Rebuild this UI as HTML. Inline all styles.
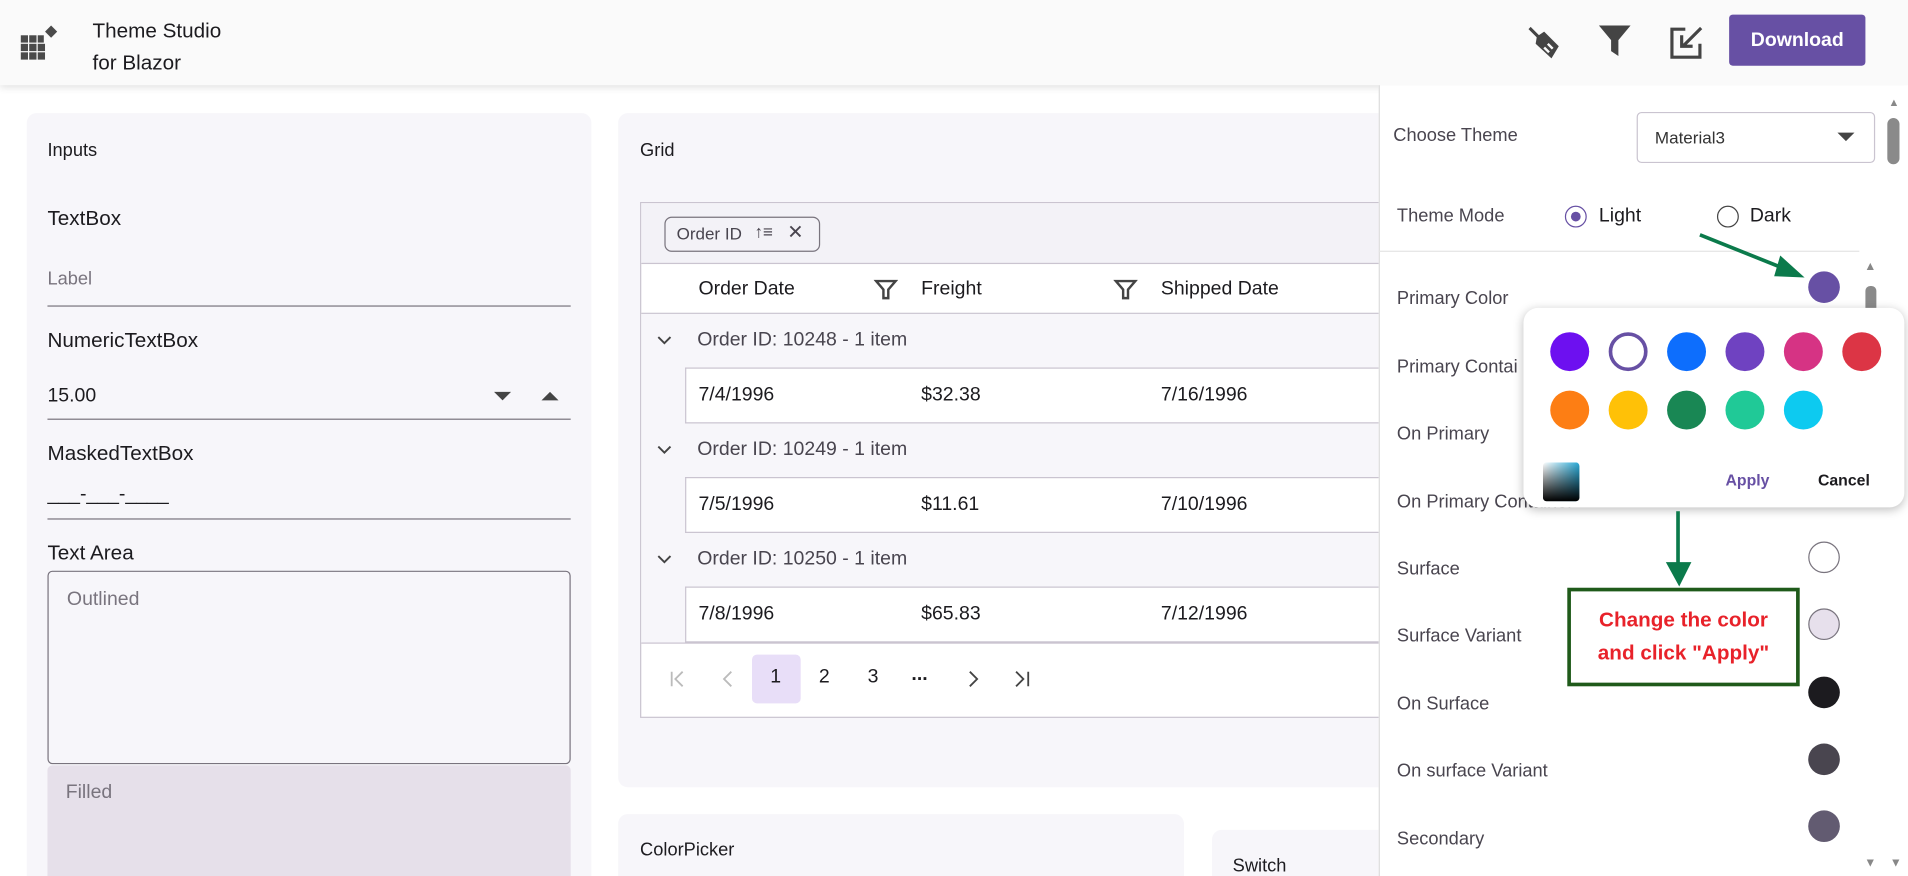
<!DOCTYPE html>
<html><head><meta charset="utf-8"><style>
*{margin:0;padding:0;box-sizing:border-box}
html,body{width:1908px;height:876px;overflow:hidden;background:#fff}
#w{position:absolute;left:0;top:0;width:1568px;height:720px;transform:scale(1.21684);transform-origin:0 0;font-family:"Liberation Sans",sans-serif;color:#1c1b1f;overflow:hidden}
.a{position:absolute;white-space:nowrap}
.card{position:absolute;background:#f7f6fa;border-radius:8px}
.t15{font-size:15px}.t17{font-size:17px}
.line{position:absolute;height:1px;background:#79747e}
.g{color:#49454f}
.cir{position:absolute;width:26px;height:26px;border-radius:50%}
.sw{position:absolute;width:32px;height:32px;border-radius:50%}
.pl{position:absolute;left:1148px;font-size:15px;color:#49454f}
</style></head><body><div id="w">
<div class="a" style="left:0;top:0;width:1568px;height:70px;background:#fafafa;box-shadow:0 2px 6px rgba(0,0,0,.12)"></div>
<svg class="a" style="left:17px;top:20px" width="32" height="30" viewBox="0 0 32 30">
<g fill="#4a4a4a"><rect x="0" y="9" width="6" height="6"/><rect x="7" y="9" width="6" height="6"/><rect x="14" y="9" width="5" height="6"/><rect x="0" y="16" width="6" height="6"/><rect x="7" y="16" width="6" height="6"/><rect x="14" y="16" width="6" height="6"/><rect x="0" y="23" width="6" height="6"/><rect x="7" y="23" width="6" height="6"/><rect x="14" y="23" width="6" height="6"/><path d="M25 1l5 5-5 5-5-5z"/></g></svg>
<div class="a" style="left:76px;top:13px;font-size:17px;line-height:26px;font-weight:500">Theme Studio<br>for Blazor</div>
<svg class="a" style="left:1254px;top:20px" width="32" height="32" viewBox="0 0 32 32"><path d="M3 3l7 7" stroke="#444" stroke-width="2.5"/><path d="M9 10l6-4 12 12-6 10-13-12z" fill="#444"/><path d="M15 19l4 4M13 22l4 4M18 16l4 4" stroke="#fafafa" stroke-width="2"/></svg>
<svg class="a" style="left:1313px;top:20px" width="28" height="28" viewBox="0 0 28 28"><path d="M1 1h26l-10 12v13l-6-4v-9z" fill="#444"/></svg>
<svg class="a" style="left:1371px;top:20px" width="30" height="30" viewBox="0 0 30 30"><path d="M14 4H3v23h23V16" fill="none" stroke="#444" stroke-width="2.6"/><path d="M27 3L12 18M11 9v9h9" fill="none" stroke="#444" stroke-width="2.6"/></svg>
<div class="a" style="left:1421px;top:12px;width:112px;height:42px;background:#6750a4;border-radius:3px;color:#fff;font-size:16px;font-weight:bold;text-align:center;line-height:44px">Download</div>
<div class="card" style="left:22px;top:93px;width:464px;height:627px;border-radius:8px 8px 0 0"></div>
<div class="a t15" style="left:39px;top:115px;font-weight:500">Inputs</div>
<div class="a t17" style="left:39px;top:170px">TextBox</div>
<div class="a t15" style="left:39px;top:221px;color:#79747e">Label</div>
<div class="line" style="left:39px;top:251px;width:430px"></div>
<div class="a t17" style="left:39px;top:270px">NumericTextBox</div>
<div class="a t15" style="left:39px;top:317px;font-size:16px">15.00</div>
<svg class="a" style="left:405px;top:321px" width="55" height="10"><path d="M1 1h14l-7 7z M40 8h14l-7-7z" fill="#444"/></svg>
<div class="line" style="left:39px;top:344px;width:430px"></div>
<div class="a t17" style="left:39px;top:363px">MaskedTextBox</div>
<div class="a" style="left:39px;top:398px;font-size:16px">___-___-____</div>
<div class="line" style="left:39px;top:426px;width:430px"></div>
<div class="a t17" style="left:39px;top:445px">Text Area</div>
<div class="a" style="left:39px;top:469px;width:430px;height:159px;border:1px solid #79747e;border-radius:4px"></div>
<div class="a t15" style="left:55px;top:484px;color:#79747e;font-size:16px">Outlined</div>
<div class="a" style="left:39px;top:629px;width:430px;height:91px;background:#e6e0ea;border-radius:4px 4px 0 0"></div>
<div class="a t15" style="left:54px;top:643px;color:#79747e;font-size:16px">Filled</div>
<div class="card" style="left:508px;top:93px;width:640px;height:554px"></div>
<div class="a t15" style="left:526px;top:115px;font-weight:500">Grid</div>
<div class="a" style="left:526px;top:166px;width:620px;height:424px;border:1px solid #cac4d0;background:#fff"></div>
<div class="a" style="left:527px;top:167px;width:620px;height:50px;background:#f3f2f7;border-bottom:1px solid #cac4d0"></div>
<div class="a" style="left:546px;top:178px;width:128px;height:29px;border:1px solid #79747e;border-radius:6px"></div>
<div class="a" style="left:556px;top:184px;font-size:14px;color:#49454f">Order ID</div>
<div class="a" style="left:620px;top:182px;font-size:14px;color:#49454f">↑≡</div>
<div class="a" style="left:647px;top:181px;font-size:16px;color:#49454f">✕</div>
<div class="a t15" style="left:574px;top:229px;font-weight:500;font-size:16px">Order Date</div>
<div class="a t15" style="left:757px;top:229px;font-weight:500;font-size:16px">Freight</div>
<div class="a t15" style="left:954px;top:229px;font-weight:500;font-size:16px">Shipped Date</div>
<svg class="a" style="left:718px;top:229px" width="20" height="18"><path d="M2 2h16l-6 7v7h-4v-7z" fill="none" stroke="#444" stroke-width="2"/></svg>
<svg class="a" style="left:915px;top:229px" width="20" height="18"><path d="M2 2h16l-6 7v7h-4v-7z" fill="none" stroke="#444" stroke-width="2"/></svg>
<div class="a" style="left:527px;top:257px;width:620px;height:1px;background:#cac4d0"></div>
<div class="a" style="left:527px;top:258px;width:620px;height:270px;background:#f7f6fa"></div>
<div class="a" style="left:563px;top:302px;width:584px;height:46px;background:#fff;border-top:1px solid #cac4d0;border-left:1px solid #cac4d0;border-bottom:1px solid #cac4d0"></div>
<div class="a" style="left:563px;top:392px;width:584px;height:46px;background:#fff;border-top:1px solid #cac4d0;border-left:1px solid #cac4d0;border-bottom:1px solid #cac4d0"></div>
<div class="a" style="left:563px;top:482px;width:584px;height:46px;background:#fff;border-top:1px solid #cac4d0;border-left:1px solid #cac4d0;border-bottom:1px solid #cac4d0"></div>
<svg class="a" style="left:539px;top:275px" width="14" height="10"><path d="M2 2l5 5 5-5" fill="none" stroke="#444" stroke-width="1.6"/></svg>
<svg class="a" style="left:539px;top:365px" width="14" height="10"><path d="M2 2l5 5 5-5" fill="none" stroke="#444" stroke-width="1.6"/></svg>
<svg class="a" style="left:539px;top:455px" width="14" height="10"><path d="M2 2l5 5 5-5" fill="none" stroke="#444" stroke-width="1.6"/></svg>
<div class="a g" style="left:573px;top:271px;font-size:16px;font-weight:500">Order ID: 10248 - 1 item</div>
<div class="a g" style="left:573px;top:361px;font-size:16px;font-weight:500">Order ID: 10249 - 1 item</div>
<div class="a g" style="left:573px;top:451px;font-size:16px;font-weight:500">Order ID: 10250 - 1 item</div>
<div class="a" style="left:574px;top:316px;font-size:16px">7/4/1996</div><div class="a" style="left:757px;top:316px;font-size:16px">$32.38</div><div class="a" style="left:954px;top:316px;font-size:16px">7/16/1996</div>
<div class="a" style="left:574px;top:406px;font-size:16px">7/5/1996</div><div class="a" style="left:757px;top:406px;font-size:16px">$11.61</div><div class="a" style="left:954px;top:406px;font-size:16px">7/10/1996</div>
<div class="a" style="left:574px;top:496px;font-size:16px">7/8/1996</div><div class="a" style="left:757px;top:496px;font-size:16px">$65.83</div><div class="a" style="left:954px;top:496px;font-size:16px">7/12/1996</div>
<div class="a" style="left:527px;top:528px;width:620px;height:1px;background:#cac4d0"></div>
<div class="a" style="left:618px;top:538px;width:40px;height:40px;background:#e8def8;border-radius:4px"></div>
<svg class="a" style="left:550px;top:551px" width="300" height="14"><g fill="none" stroke-width="1.5"><path d="M2 1v12M11 1L5 7l6 6" stroke="#bbb"/><path d="M51 1L45 7l6 6" stroke="#bbb"/><path d="M247 1l6 6-6 6" stroke="#444"/><path d="M285 1l6 6-6 6M295 1v12" stroke="#444"/></g></svg>
<div class="a" style="left:633px;top:548px;font-size:16px">1</div>
<div class="a" style="left:673px;top:548px;font-size:16px">2</div>
<div class="a" style="left:713px;top:548px;font-size:16px">3</div>
<div class="a" style="left:749px;top:546px;font-size:16px;font-weight:bold">...</div>
<div class="card" style="left:508px;top:669px;width:465px;height:51px;border-radius:8px 8px 0 0"></div>
<div class="a t15" style="left:526px;top:690px;font-weight:500">ColorPicker</div>
<div class="card" style="left:996px;top:682px;width:200px;height:38px;border-radius:8px 8px 0 0"></div>
<div class="a t15" style="left:1013px;top:703px;font-weight:500">Switch</div>
<div class="a" style="left:1133px;top:70px;width:435px;height:650px;background:#fff;border-left:1px solid #ddd"></div>
<div class="a" style="left:1552px;top:79px;font-size:9px;color:#888">▲</div>
<div class="a" style="left:1551px;top:97px;width:10px;height:38px;background:#8a8a8a;border-radius:5px"></div>
<div class="pl" style="left:1145px;top:103px">Choose Theme</div>
<div class="a" style="left:1345px;top:92px;width:196px;height:42px;border:1px solid #cac4d0;border-radius:4px"></div>
<div class="a" style="left:1360px;top:105px;font-size:14px;color:#333">Material3</div>
<svg class="a" style="left:1509px;top:108px" width="16" height="9"><path d="M1 1h14l-7 7z" fill="#444"/></svg>
<div class="pl" style="top:169px">Theme Mode</div>
<div class="a" style="left:1286px;top:169px;width:18px;height:18px;border:1.5px solid #6750a4;border-radius:50%"></div>
<div class="a" style="left:1291px;top:174px;width:8px;height:8px;background:#6750a4;border-radius:50%"></div>
<div class="a" style="left:1314px;top:169px;font-size:16px">Light</div>
<div class="a" style="left:1411px;top:169px;width:18px;height:18px;border:1.5px solid #444;border-radius:50%"></div>
<div class="a" style="left:1438px;top:169px;font-size:16px">Dark</div>
<div class="a" style="left:1133px;top:206px;width:395px;height:1px;background:#e4e4e4"></div>
<div class="a" style="left:1532px;top:214px;font-size:10px;color:#888">▲</div>
<div class="a" style="left:1533px;top:235px;width:9px;height:30px;background:#8a8a8a;border-radius:4px"></div>
<div class="a" style="left:1532px;top:704px;font-size:10px;color:#888">▼</div><div class="a" style="left:1553px;top:704px;font-size:10px;color:#888">▼</div>
<div class="pl" style="top:237px">Primary Color</div>
<div class="pl" style="top:293px">Primary Contai</div>
<div class="pl" style="top:348px">On Primary</div>
<div class="pl" style="top:404px">On Primary Container</div>
<div class="pl" style="top:459px">Surface</div>
<div class="pl" style="top:514px">Surface Variant</div>
<div class="pl" style="top:570px">On Surface</div>
<div class="pl" style="top:625px">On surface Variant</div>
<div class="pl" style="top:681px">Secondary</div>
<div class="cir" style="left:1486px;top:223px;background:#6750a4"></div>
<div class="cir" style="left:1486px;top:445px;background:#fff;border:1px solid #79747e"></div>
<div class="cir" style="left:1486px;top:500px;background:#e7e0ec;border:1px solid #79747e"></div>
<div class="cir" style="left:1486px;top:556px;background:#1c1b1f"></div>
<div class="cir" style="left:1486px;top:611px;background:#49454f"></div>
<div class="cir" style="left:1486px;top:666px;background:#625b71"></div>
<div class="a" style="left:1252px;top:253px;width:313px;height:164px;background:#fff;border-radius:12px;box-shadow:0 2px 8px rgba(0,0,0,.25)"></div>
<div class="sw" style="left:1274px;top:273px;background:#6d10f0"></div>
<div class="sw" style="left:1322px;top:273px;border:3px solid #6750a4;background:#fff"></div>
<div class="sw" style="left:1370px;top:273px;background:#0d6efd"></div>
<div class="sw" style="left:1418px;top:273px;background:#6f42c1"></div>
<div class="sw" style="left:1466px;top:273px;background:#d63384"></div>
<div class="sw" style="left:1514px;top:273px;background:#dc3545"></div>
<div class="sw" style="left:1274px;top:321px;background:#fd7e14"></div>
<div class="sw" style="left:1322px;top:321px;background:#ffc107"></div>
<div class="sw" style="left:1370px;top:321px;background:#198754"></div>
<div class="sw" style="left:1418px;top:321px;background:#20c997"></div>
<div class="sw" style="left:1466px;top:321px;background:#0dcaf0"></div>
<div class="a" style="left:1268px;top:380px;width:30px;height:32px;border-radius:3px;background:linear-gradient(to bottom,rgba(0,0,0,0),#000),linear-gradient(to right,#fff,#29a9d6)"></div>
<div class="a" style="left:1418px;top:387px;font-size:13px;font-weight:bold;color:#6750a4">Apply</div>
<div class="a" style="left:1494px;top:387px;font-size:13px;font-weight:bold;color:#1c1b1f">Cancel</div>
<svg class="a" style="left:1380px;top:180px" width="120" height="60"><path d="M17 13L92 43" stroke="#0b7a4b" stroke-width="3"/><path d="M83 30L103 48L78 47z" fill="#0b7a4b"/></svg>
<svg class="a" style="left:1360px;top:420px" width="40" height="64"><path d="M19 0V45" stroke="#0b7a4b" stroke-width="3"/><path d="M9 42h21l-10 20z" fill="#0b7a4b"/></svg>
<div class="a" style="left:1288px;top:483px;width:191px;height:81px;border:3px solid #1f5a1a;background:#fff;color:#e8222a;font-weight:bold;font-size:17px;text-align:center;line-height:27px;padding-top:10px">Change the color<br>and click "Apply"</div>
</div></body></html>
